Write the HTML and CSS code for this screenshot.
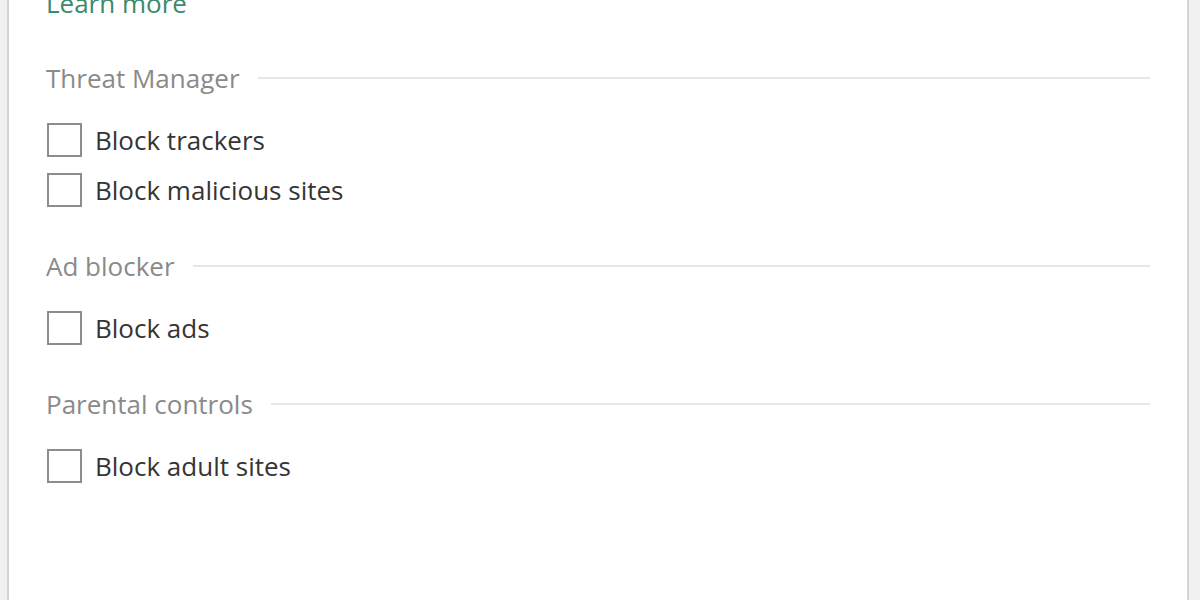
FILE: index.html
```html
<!DOCTYPE html>
<html lang="en">
<head>
    <meta charset="UTF-8">
    <meta name="viewport" content="width=device-width, initial-scale=1.0">
    <title>Protection settings</title>
    <link rel="stylesheet" href="styles.css">
</head>
<body>
    <div class="panel">
        <a class="learn-more" href="#">Learn more</a>

        <div class="section">
            <div class="section-title"><span>Threat Manager</span><div class="rule"></div></div>
            <label class="option"><input type="checkbox"><span class="box"></span>Block trackers</label>
            <label class="option"><input type="checkbox"><span class="box"></span>Block malicious sites</label>
        </div>

        <div class="section">
            <div class="section-title"><span>Ad blocker</span><div class="rule"></div></div>
            <label class="option"><input type="checkbox"><span class="box"></span>Block ads</label>
        </div>

        <div class="section">
            <div class="section-title"><span>Parental controls</span><div class="rule"></div></div>
            <label class="option"><input type="checkbox"><span class="box"></span>Block adult sites</label>
        </div>
    </div>
</body>
</html>
```

FILE: styles.css
```css
html, body {
    height: 100%;
}
body {
    margin: 0;
    background-color: #f1f1f1;
    font-family: "Open Sans", "Noto Sans", sans-serif;
    overflow: hidden;
}
.panel {
    display: flow-root;
    box-sizing: border-box;
    height: 100%;
    margin: 0 11px 0 7px;
    padding: 0 37px 0 37px;
    background-color: #fff;
    border-left: 2px solid #d4d4d4;
    border-right: 2px solid #d4d4d4;
}
.learn-more {
    display: block;
    margin-top: -12px;
    line-height: 30px;
    font-size: 26px;
    color: #3a8a6c;
    text-decoration: none;
}
.section {
    margin-top: 36px;
}
.section:first-of-type {
    margin-top: 45px;
}
.section-title {
    display: flex;
    align-items: center;
    gap: 18px;
    line-height: 30px;
    margin-bottom: 22px;
    font-size: 26px;
    color: #8a8a8a;
}
.rule {
    flex: 1;
    height: 2px;
    background-color: #e6e6e6;
}
.option {
    display: flex;
    align-items: center;
    height: 50px;
    font-size: 26px;
    color: #353535;
    cursor: pointer;
}
.option input {
    display: none;
}
.box {
    box-sizing: border-box;
    width: 35px;
    height: 34px;
    margin-left: 1px;
    margin-right: 13px;
    border: 2px solid #8c8c8c;
    background-color: #fff;
}
```
